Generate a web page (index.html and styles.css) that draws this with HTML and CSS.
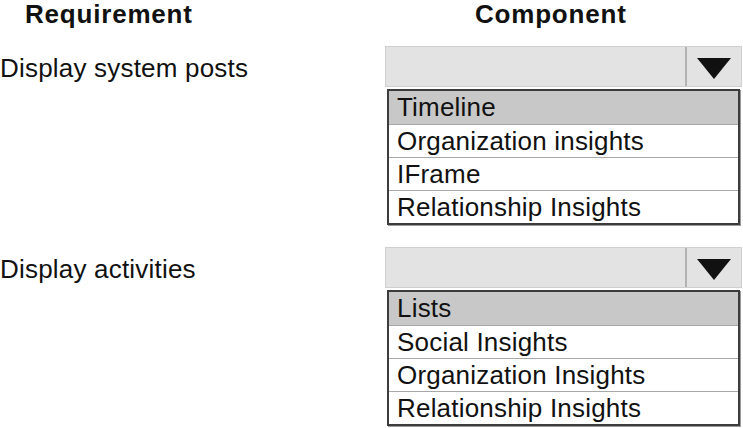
FILE: index.html
```html
<!DOCTYPE html>
<html>
<head>
<meta charset="utf-8">
<link rel="stylesheet" href="styles.css">
</head>
<body>
<div class="page">
  <div class="heads">
    <div class="h-req">Requirement</div>
    <div class="h-comp">Component</div>
  </div>
  <div class="row">
    <div class="req">Display system posts</div>
    <div class="comp">
      <div class="select">
        <div class="field"></div>
        <div class="btn"><svg width="36" height="24" viewBox="0 0 36 24"><polygon points="1,2 35,2 18,23" fill="#111"/></svg></div>
      </div>
      <div class="list">
        <div class="item sel">Timeline</div>
        <div class="item">Organization insights</div>
        <div class="item">IFrame</div>
        <div class="item">Relationship Insights</div>
      </div>
    </div>
  </div>
  <div class="row row2">
    <div class="req">Display activities</div>
    <div class="comp">
      <div class="select">
        <div class="field"></div>
        <div class="btn"><svg width="36" height="24" viewBox="0 0 36 24"><polygon points="1,2 35,2 18,23" fill="#111"/></svg></div>
      </div>
      <div class="list">
        <div class="item sel">Lists</div>
        <div class="item">Social Insights</div>
        <div class="item">Organization Insights</div>
        <div class="item">Relationship Insights</div>
      </div>
    </div>
  </div>
</div>
</body>
</html>
```

FILE: styles.css
```css
* { box-sizing: border-box; }
html, body { margin: 0; padding: 0; background: #fff; }
body {
  font-family: "Liberation Sans", Arial, sans-serif;
  color: #111;
  width: 743px;
  height: 428px;
  overflow: hidden;
}
.heads {
  display: flex;
  height: 46px;
  font-weight: bold;
  font-size: 26px;
  line-height: 28px;
  letter-spacing: 0.8px;
}
.h-req { width: 475px; padding-left: 25px; }
.h-comp { }
.row {
  display: flex;
  align-items: flex-start;
}
.row2 { margin-top: 22px; }
.req {
  width: 385px;
  font-size: 26px;
  line-height: 41px;
  padding-top: 2px;
  letter-spacing: 0.2px;
}
.comp { width: 357px; }
.select {
  display: flex;
  height: 41px;
  border: 1px solid #cfcfcf;
  background: #e3e3e3;
}
.field { flex: 1; }
.btn {
  width: 56px;
  border-left: 2px solid #b3b3b3;
  display: flex;
  align-items: center;
  justify-content: center;
  padding-top: 2px;
}
.btn svg { display: block; }
.list {
  margin-top: 2px;
  margin-left: 2px;
  width: 353px;
  border: 2px solid #3c3c3c;
  box-shadow: 1px 1px 0 #9a9a9a;
  background: #fff;
}
.item {
  height: 33px;
  font-size: 26px;
  line-height: 33px;
  padding-left: 8px;
  letter-spacing: 0.2px;
  border-top: 1px solid #a8a8a8;
  white-space: nowrap;
}
.item:first-child { border-top: none; }
.item.sel { background: #c8c8c8; }
```
